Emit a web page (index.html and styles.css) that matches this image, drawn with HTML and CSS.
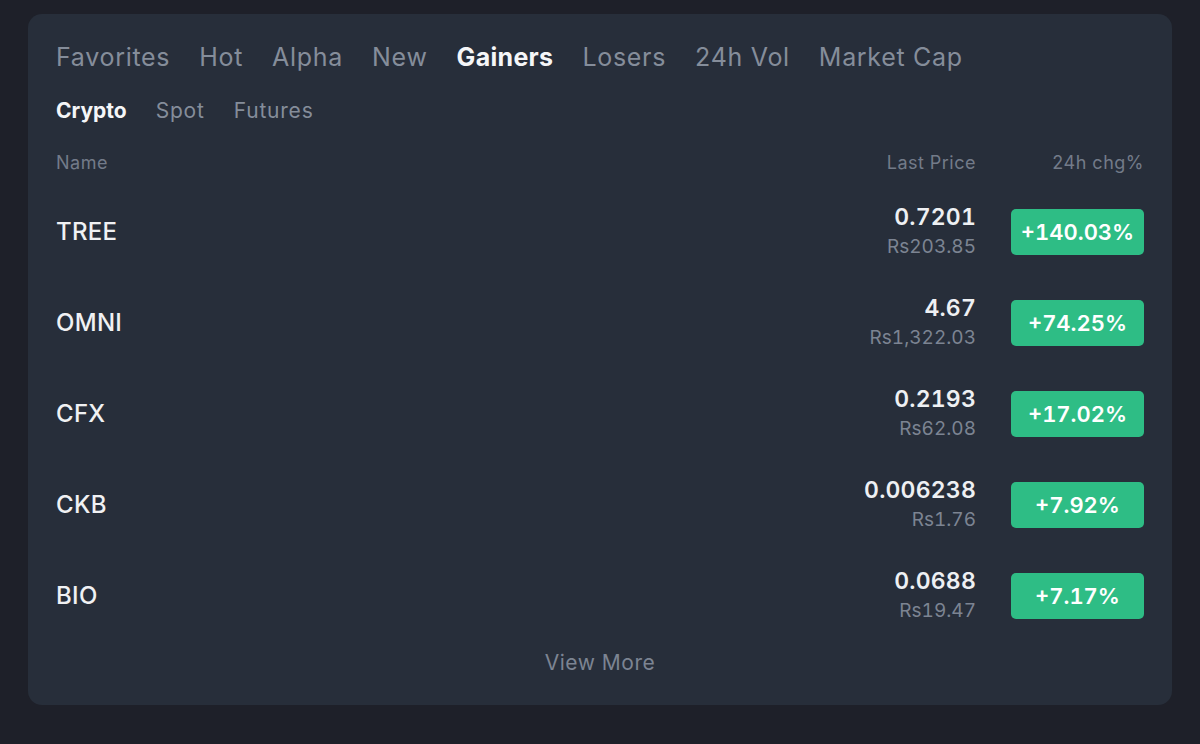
FILE: index.html
```html
<!DOCTYPE html>
<html lang="en">
<head>
    <meta charset="UTF-8">
    <meta name="viewport" content="width=device-width, initial-scale=1.0">
    <title>Markets</title>
    <link rel="stylesheet" href="styles.css">
</head>
<body>
    <div class="market-card">
        <!-- main tabs -->
        <div class="tabs">
            <span class="tab">Favorites</span>
            <span class="tab">Hot</span>
            <span class="tab">Alpha</span>
            <span class="tab">New</span>
            <span class="tab active">Gainers</span>
            <span class="tab">Losers</span>
            <span class="tab">24h Vol</span>
            <span class="tab">Market Cap</span>
        </div>

        <div class="subtabs">
            <span class="subtab active">Crypto</span>
            <span class="subtab">Spot</span>
            <span class="subtab">Futures</span>
        </div>

        <div class="table-head">
            <span class="col-name">Name</span>
            <span class="col-price">Last Price</span>
            <span class="col-chg">24h chg%</span>
        </div>

        <div class="rows">
            <div class="row">
                <span class="col-name coin">TREE</span>
                <div class="col-price">
                    <div class="price">0.7201</div>
                    <div class="fiat">Rs203.85</div>
                </div>
                <div class="col-chg"><span class="badge">+140.03%</span></div>
            </div>
            <div class="row">
                <span class="col-name coin">OMNI</span>
                <div class="col-price">
                    <div class="price">4.67</div>
                    <div class="fiat">Rs1,322.03</div>
                </div>
                <div class="col-chg"><span class="badge">+74.25%</span></div>
            </div>
            <div class="row">
                <span class="col-name coin">CFX</span>
                <div class="col-price">
                    <div class="price">0.2193</div>
                    <div class="fiat">Rs62.08</div>
                </div>
                <div class="col-chg"><span class="badge">+17.02%</span></div>
            </div>
            <div class="row">
                <span class="col-name coin">CKB</span>
                <div class="col-price">
                    <div class="price">0.006238</div>
                    <div class="fiat">Rs1.76</div>
                </div>
                <div class="col-chg"><span class="badge">+7.92%</span></div>
            </div>
            <div class="row">
                <span class="col-name coin">BIO</span>
                <div class="col-price">
                    <div class="price">0.0688</div>
                    <div class="fiat">Rs19.47</div>
                </div>
                <div class="col-chg"><span class="badge">+7.17%</span></div>
            </div>
        </div>

        <div class="view-more">View More</div>
    </div>
</body>
</html>
```

FILE: styles.css
```css
/* market list card */
body {
    margin: 0;
    padding: 14px 28px;
    background-color: #1e2029;
    font-family: Inter, "Open Sans", sans-serif;
    color: #eaecef;
}

.market-card {
    height: 691px;
    box-sizing: border-box;
    padding: 27px 28px 0;
    border-radius: 14px;
    background-color: #272e3a;
}

.tabs {
    display: flex;
    gap: 29px;
    height: 32px;
    line-height: 32px;
    font-size: 25px;
    letter-spacing: 0.7px;
    color: #858d9a;
}

.tab.active {
    color: #f5f6f8;
    font-weight: 700;
    letter-spacing: 0.3px;
}

.subtabs {
    display: flex;
    gap: 29px;
    margin-top: 24px;
    height: 28px;
    line-height: 28px;
    font-size: 21px;
    letter-spacing: 0.8px;
    color: #858d9a;
}

.subtab.active {
    color: #f5f6f8;
    font-weight: 700;
    letter-spacing: 0;
}

.table-head {
    display: flex;
    align-items: center;
    margin-top: 25px;
    height: 24px;
    font-size: 18px;
    letter-spacing: 0.5px;
    color: #737b89;
}

.col-name {
    flex: 1;
}

.col-price {
    text-align: right;
    font-variant-numeric: tabular-nums;
}

.col-chg {
    width: 133px;
    margin-left: 35px;
    text-align: right;
}

.rows {
    margin-top: 12px;
}

.row {
    display: flex;
    align-items: center;
    height: 91px;
}

.coin {
    font-size: 24px;
    font-weight: 500;
    letter-spacing: 0.3px;
    color: #f0f1f3;
}

.price {
    line-height: 28px;
    font-size: 23px;
    font-weight: 600;
    letter-spacing: 0.2px;
    color: #eef0f3;
}

.fiat {
    margin-top: 2px;
    line-height: 28px;
    font-size: 19px;
    color: #7c8492;
}

.badge {
    display: block;
    height: 46px;
    line-height: 46px;
    border-radius: 5px;
    background-color: #2ebd85;
    color: #ffffff;
    font-size: 22px;
    font-weight: 600;
    font-variant-numeric: tabular-nums;
    text-align: center;
}

.view-more {
    margin-top: 8px;
    line-height: 28px;
    font-size: 21px;
    letter-spacing: 0.5px;
    text-align: center;
    color: #7c8492;
}
```
